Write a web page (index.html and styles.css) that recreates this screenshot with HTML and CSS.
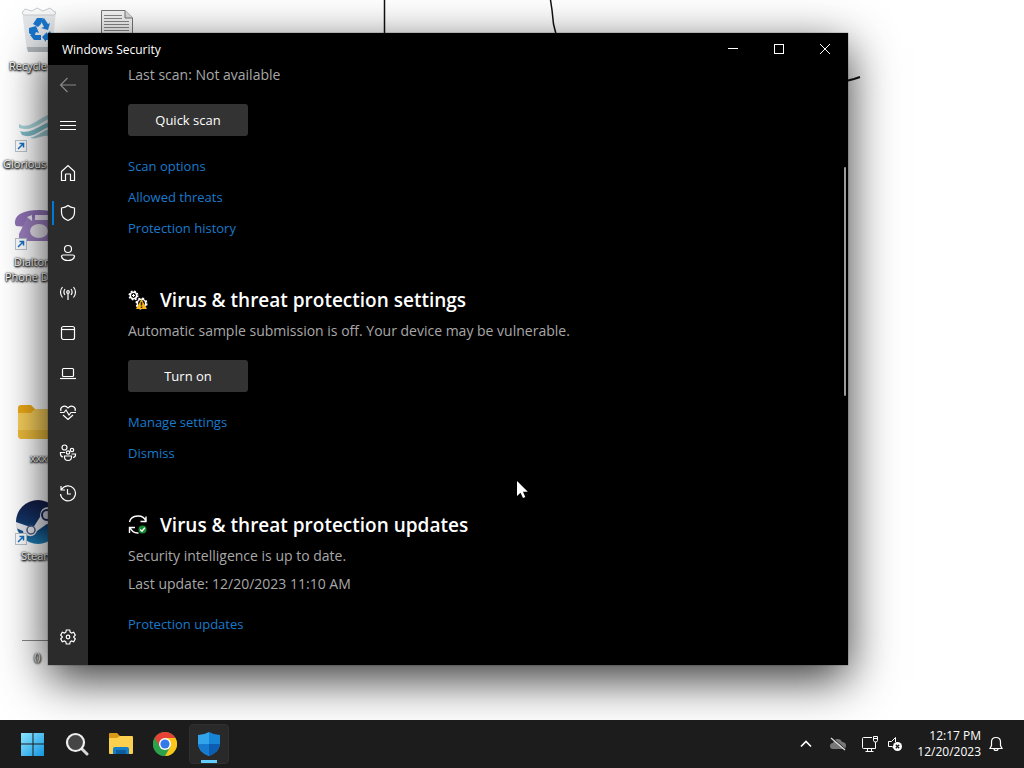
FILE: index.html
```html
<!DOCTYPE html>
<html lang="en">
<head>
<meta charset="utf-8">
<title>Windows Security</title>
<meta name="viewport" content="width=device-width, initial-scale=1">
<link rel="stylesheet" href="styles.css">
</head>
<body>
<div class="desktop">
  <svg class="wallpaper" width="1024" height="100" viewBox="0 0 1024 100" aria-hidden="true" fill="none" stroke="#111">
    <path d="M384.500 0V40" stroke-width="1.500"/>
    <path d="M550.500 0L552 10L553.500 24L556 34" stroke-width="1.500"/>
    <path d="M846 81L852 79.500L854 79L860 77" stroke-width="2"/>
  </svg>

  <div class="shortcut shortcut-recycle">
    <svg width="40" height="48" viewBox="0 0 40 48" aria-hidden="true">
      <path d="M2 5L36 5L32 45H7Z" fill="#e4e7ea"/>
      <path d="M7 41H32L31 46H8Z" fill="#b4b9bd"/>
      <path d="M2 7L5 3L12 5L17 2L23 5L30 2L36 7L34 9H4Z" fill="#f8f8f8" stroke="#c8ccd0"/>
      <g fill="#1877cf">
        <path d="M13 18L17 12L23 12L21 18L18 21Z"/>
        <path d="M24 12L28 18L30 17L28 24L21 22L24 21L21 15Z"/>
        <path d="M9 22L16 20L19 27L16 26L14 31L9 27Z"/>
        <path d="M15 29H21V34H14L10 29Z"/>
        <path d="M22 31L27 26V28L30 25L32 29L28 34H26V36Z"/>
      </g>
    </svg>
    <span>Recycle Bin</span>
  </div>
  <div class="shortcut shortcut-document">
    <svg width="34" height="40" viewBox="0 0 34 40" aria-hidden="true">
      <path d="M1.500 1.500H25L32.500 9V40H1.500Z" fill="#f6f6f6" stroke="#777"/>
      <path d="M25 1.500V9H32.500" fill="#ddd" stroke="#777"/>
      <path d="M4 6.500H22M4 9.500H22M4 12.500H29M4 15.500H29M4 18.500H29M4 21.500H29" stroke="#888"/>
    </svg>
  </div>
  <div class="shortcut shortcut-glorious">
    <svg width="48" height="46" viewBox="0 0 48 46" aria-hidden="true">
      <path d="M4 15C13 21 21 11 35 5V9C25 14 18 23 4 19Z" fill="#a9d5db"/>
      <path d="M5 22C16 26 25 15 40 11V16C27 18 19 31 7 26Z" fill="#7fbcc8"/>
      <path d="M15 29C23 27 29 20 42 18V29L32 27C27 26 22 31 15 29Z" fill="#9ccbd3"/>
      <rect x=".5" y="31.500" width="11" height="11" fill="#fff" stroke="#b9c4cc"/><path d="M3 40L8.500 34.500M4.500 34.500H8.500V38.500" fill="none" stroke="#1671c4" stroke-width="1.500"/>
    </svg>
    <span>Glorious Core</span>
  </div>
  <div class="shortcut shortcut-phone">
    <svg width="48" height="44" viewBox="0 0 48 44" aria-hidden="true">
      <path d="M0 17C-1 8 8 3 24 3S48 8 48 17V18H36V12H12V20L1 19Z" fill="#8f72b5"/>
      <path d="M12 11H37L44 25V34H4V27Z" fill="#9b7fbe"/>
      <path d="M12 10L17 8V14Z M20 8H35V13H20Z" fill="#eee7f5"/>
      <ellipse cx="24" cy="24" rx="9" ry="7" fill="#e8e3ed"/>
      <rect x=".5" y="31.500" width="11" height="11" fill="#fff" stroke="#b9c4cc"/><path d="M3 40L8.500 34.500M4.500 34.500H8.500V38.500" fill="none" stroke="#1671c4" stroke-width="1.500"/>
    </svg>
    <span>Dialtone<br>Phone Deck</span>
  </div>
  <div class="shortcut shortcut-folder">
    <svg width="44" height="36" viewBox="0 0 44 36" aria-hidden="true">
      <path d="M0 3Q0 0 3 0H13L17 4H44V12H0Z" fill="#eeaa18"/>
      <path d="M0 8H13L17 4H44V33H3Q0 33 0 30Z" fill="#f8cf5b"/>
      <path d="M0 25H44V34H3Q0 34 0 30Z" fill="#eebc3d"/>
    </svg>
    <span>xxx</span>
  </div>
  <div class="shortcut shortcut-steam">
    <svg width="48" height="48" viewBox="0 0 48 48" aria-hidden="true">
      <defs><linearGradient id="steam" x2="0" y2="1"><stop stop-color="#151b45"/><stop offset=".5" stop-color="#12376c"/><stop offset="1" stop-color="#1d82bb"/></linearGradient></defs>
      <circle cx="23" cy="23" r="22" fill="url(#steam)"/>
      <path d="M1 23L18 29L25 18Q25 8 34 8T43 18T32 25L22 32Q20 38 14 37T8 32L1 29Z" fill="#e6e7ee"/>
      <circle cx="32" cy="16" r="5" fill="#cdd1db" stroke="#1b2855" stroke-width="2"/>
      <circle cx="16" cy="31" r="4" fill="#e6e7ee" stroke="#4d5a80" stroke-width="1.500"/>
      <rect x=".5" y="34.500" width="11" height="11" fill="#fff" stroke="#b9c4cc"/><path d="M3 43L8.500 37.500M4.500 37.500H8.500V41.500" fill="none" stroke="#1671c4" stroke-width="1.500"/>
    </svg>
    <span>Steam</span>
  </div>
  <div class="shortcut shortcut-file"><span>()</span></div>

  <main class="window">
    <header class="titlebar">
      <h1>Windows Security</h1>
      <div class="caption-buttons">
        <button type="button" aria-label="Minimize"><svg width="12" height="12" viewBox="0 0 12 12"><path d="M1 5.500H11"/></svg></button>
        <button type="button" aria-label="Maximize"><svg width="12" height="12" viewBox="0 0 12 12"><rect x="1.500" y="1.500" width="9" height="9"/></svg></button>
        <button type="button" aria-label="Close"><svg width="12" height="12" viewBox="0 0 12 12"><path d="M1 1L11 11M11 1L1 11"/></svg></button>
      </div>
    </header>
    <div class="window-body">
      <nav class="sidebar" aria-label="Sections">
        <button type="button" class="back" aria-label="Back"><svg width="18" height="18" viewBox="0 0 18 18"><path d="M17 9H1.500M8.500 2L1.500 9L8.500 16"/></svg></button>
        <button type="button" class="menu" aria-label="Menu"><svg width="18" height="18" viewBox="0 0 18 18"><path d="M1 5.500H17M1 9.500H17M1 13.500H17"/></svg></button>
        <button type="button" aria-label="Home"><svg width="18" height="18" viewBox="0 0 18 18"><path d="M2.500 7.500L9 1.500L15.500 7.500V16.500H11.500V10.500Q11.500 10 11 10H7Q6.500 10 6.500 10.500V16.500H2.500Z"/></svg></button>
        <button type="button" class="selected" aria-label="Virus &amp; threat protection"><svg width="18" height="18" viewBox="0 0 18 18"><path d="M9 1.500Q11.500 3.700 15.500 4V8.500Q15.500 14 9 16.500Q2.500 14 2.500 8.500V4Q6.500 3.700 9 1.500Z"/></svg></button>
        <button type="button" aria-label="Account protection"><svg width="18" height="18" viewBox="0 0 18 18"><circle cx="9" cy="5" r="3.500"/><path d="M4 11H14Q15.500 11 15.500 12.500Q14.500 16.500 9 16.500T2.500 12.500Q2.500 11 4 11Z"/></svg></button>
        <button type="button" aria-label="Firewall &amp; network protection"><svg width="18" height="18" viewBox="0 0 18 18"><circle cx="9" cy="8" r="1.300"/><path d="M9 9.500V16M6 5Q3.800 8 6 11M12 5Q14.200 8 12 11M3.500 3Q-.5 8 3.500 13.500M14.500 3Q18.500 8 14.500 13.500"/></svg></button>
        <button type="button" aria-label="App &amp; browser control"><svg width="18" height="18" viewBox="0 0 18 18"><rect x="2.500" y="2.500" width="13" height="13" rx="2"/><path d="M2.500 5.500H15.500"/></svg></button>
        <button type="button" aria-label="Device security"><svg width="18" height="18" viewBox="0 0 18 18"><rect x="3.500" y="4.500" width="11" height="8" rx="1"/><path d="M1 14.500H17"/></svg></button>
        <button type="button" aria-label="Device performance &amp; health"><svg width="18" height="18" viewBox="0 0 18 18"><path d="M2 7Q1 4.500 3 3Q6.500 .8 9 4Q11.500 .8 15 3Q17 4.500 16 7M1 8.500H5L7 6L10 11L12 8.500H17M4 11L9 15.500L14 11"/></svg></button>
        <button type="button" aria-label="Family options"><svg width="18" height="18" viewBox="0 0 18 18"><circle cx="5.500" cy="3.500" r="2.500"/><circle cx="13" cy="6" r="1.700"/><circle cx="9" cy="8.500" r="1.700"/><path d="M5.500 12H12.500V13Q12.500 16.500 9 16.500T5.500 13ZM6 8.500H1.500V10Q1.500 12.500 4 13M12.500 10H16.500V11Q16.500 13 14 13.500"/></svg></button>
        <button type="button" aria-label="Protection history"><svg width="18" height="18" viewBox="0 0 18 18"><path d="M2 2V6H6M2.500 5.500A7.500 7.500 0 1 1 1.500 10M8.500 5V10H12"/></svg></button>
        <button type="button" class="settings" aria-label="Settings"><svg width="18" height="18" viewBox="0 0 18 18"><path d="M7.300 2H10.700L11.200 4.200L12.500 5L14.700 4.300L16.300 7.200L14.700 8.700V9.300L16.300 10.800L14.700 13.700L12.500 13L11.200 13.800L10.700 16H7.300L6.800 13.800L5.500 13L3.300 13.700L1.700 10.800L3.300 9.300V8.700L1.700 7.200L3.300 4.300L5.500 5L6.800 4.200Z"/><circle cx="9" cy="9" r="1.800"/></svg></button>
      </nav>
      <div class="content">
        <section>
          <p>Last scan: Not available</p>
          <button type="button" class="action">Quick scan</button>
          <ul class="links">
            <li><a href="#scan-options">Scan options</a></li>
            <li><a href="#allowed">Allowed threats</a></li>
            <li><a href="#history">Protection history</a></li>
          </ul>
        </section>
        <section>
          <h2>
            <svg width="20" height="20" viewBox="0 0 20 20" aria-hidden="true">
              <g fill="none" stroke="#fff"><circle cx="5.500" cy="5.500" r="3.200" stroke-width="1.500"/><circle cx="5.500" cy="5.500" r="4.300" stroke-width="1.500" stroke-dasharray="1.700 1.700"/><path d="M5.500 4V7M4 5.500H7"/><circle cx="13.500" cy="13.500" r="4.200" stroke-width="1.500"/><circle cx="13.500" cy="13.500" r="5.300" stroke-width="1.500" stroke-dasharray="2.100 2.060"/></g>
              <path d="M13.500 9L19 19H8Z" fill="#f8b51b"/><path d="M13.500 12V15.500M13.500 16.500V18" stroke="#332500" stroke-width="1.500"/>
            </svg>
            Virus &amp; threat protection settings
          </h2>
          <p>Automatic sample submission is off. Your device may be vulnerable.</p>
          <button type="button" class="action">Turn on</button>
          <ul class="links">
            <li><a href="#manage">Manage settings</a></li>
            <li><a href="#dismiss">Dismiss</a></li>
          </ul>
        </section>
        <section>
          <h2>
            <svg width="20" height="20" viewBox="0 0 20 20" aria-hidden="true">
              <path d="M1.500 7A8.500 7.500 0 0 1 18 6.500M18 1.500V6.500H12.500M10.500 18Q4.500 18.500 2 12.500M1.500 18V12.500H7" fill="none" stroke="#fff" stroke-width="1.400"/>
              <circle cx="14.500" cy="14.500" r="4" fill="#138a2e"/><path d="M12.200 14.500L14 16.300L16.800 12.800" fill="none" stroke="#fff" stroke-width="1.400"/>
            </svg>
            Virus &amp; threat protection updates
          </h2>
          <p>Security intelligence is up to date.</p>
          <p>Last update: 12/20/2023 11:10 AM</p>
          <ul class="links">
            <li><a href="#updates">Protection updates</a></li>
          </ul>
        </section>
        <div class="scroll-thumb"></div>
      </div>
    </div>
  </main>
  <svg class="cursor" width="13" height="19" viewBox="0 0 13 19" aria-hidden="true"><path d="M1 1V16L4.500 12.700L7 18L9.300 17L7 11.800H11.800Z" fill="#fff"/></svg>
</div>

<footer class="taskbar">
  <div class="apps">
    <button type="button" aria-label="Start"><svg width="24" height="24" viewBox="0 0 24 24"><defs><linearGradient id="win" x2="1" y2="1"><stop stop-color="#8be5ff"/><stop offset="1" stop-color="#1496e0"/></linearGradient></defs><path d="M0 1H11.500V11.500H0ZM12.500 1H23V11.500H12.500ZM0 12.500H11.500V24H0ZM12.500 12.500H23V24H12.500Z" fill="url(#win)"/></svg></button>
    <button type="button" aria-label="Search"><svg width="24" height="24" viewBox="0 0 24 24"><path d="M17 17L22 22" stroke="#d8d8d8" stroke-width="3" stroke-linecap="round"/><circle cx="10.500" cy="10.500" r="8.500" fill="#454545" stroke="#eee" stroke-width="2.200"/></svg></button>
    <button type="button" aria-label="File Explorer"><svg width="26" height="24" viewBox="0 0 26 24"><path d="M1 2Q1 1 2 1H9L12 4H24V10H1Z" fill="#d99a16"/><path d="M1 6H9L12 4H24Q25 4 25 5V21Q25 22 24 22H2Q1 22 1 21Z" fill="#fbd04f"/><path d="M5 22V17Q5 15 7 15H19Q21 15 21 17V22Z" fill="#167dc9"/><path d="M8 18H18V22H8Z" fill="#0c5c9e"/></svg></button>
    <button type="button" aria-label="Chrome"><svg width="24" height="24" viewBox="0 0 24 24"><circle cx="12" cy="12" r="12" fill="#2ca24c"/><path d="M12 12L1.600 6A12 12 0 0 1 22.400 6Z" fill="#e64235"/><path d="M12 6H22.400A12 12 0 0 1 12 24L17.200 15Z" fill="#fbc51b"/><path d="M1.600 6L6.800 15L12 12L12 6Z" fill="#e64235"/><path d="M1.600 6L6.800 15L9 17L12 24A12 12 0 0 1 1.600 6Z" fill="#2ca24c"/><circle cx="12" cy="12" r="6" fill="#fff"/><circle cx="12" cy="12" r="4.600" fill="#3479e8"/></svg></button>
    <button type="button" class="active" aria-label="Windows Security"><svg width="24" height="26" viewBox="0 0 24 26"><path d="M12 1Q17 4 23 4V12Q23 21 12 25Z" fill="#1685d8"/><path d="M12 1Q7 4 1 4V12Q1 21 12 25Z" fill="#31a4ec"/><path d="M1 13H12V25Q2 21 1 13Z" fill="#167bd0"/><path d="M12 13H23Q22 21 12 25Z" fill="#0c5cb2"/></svg></button>
  </div>
  <div class="tray">
    <button type="button" aria-label="Show hidden icons"><svg width="16" height="16" viewBox="0 0 16 16"><path d="M3 10.500L8 5.500L13 10.500" stroke-width="1.700"/></svg></button>
    <button type="button" aria-label="OneDrive"><svg width="18" height="16" viewBox="0 0 18 16"><path d="M4 13Q1 13 1 10T4 7Q5 3 8.500 3T13 6Q17 6 17 9.500T14 13Z" fill="#777" stroke="none"/><path d="M3 1.500L17 13.500" stroke="#1c1c1c"/><path d="M2 2L16 14" stroke="#ddd" stroke-width="1.300"/></svg></button>
    <button type="button" class="network" aria-label="Network"><svg width="18" height="18" viewBox="0 0 18 18"><path d="M11 2.500H2.500Q1.500 2.500 1.500 3.500V12.500Q1.500 13.500 2.500 13.500H14.500V7M6.500 13.500V16.500M10.500 13.500V16.500M4.500 16.500H12.500M12.500 1.500H16.500V5.500Q16.500 7 14.500 7T12.500 5.500ZM12.500 3.500H16.500"/></svg></button>
    <button type="button" class="sound" aria-label="Volume muted"><svg width="16" height="16" viewBox="0 0 16 16"><path d="M8 13L5 10.500H1.500V5.500H4.500L8.500 1.500V6"/><circle cx="10.500" cy="10.500" r="4.500" fill="#fff" stroke="none"/><path d="M8.800 8.800L12.200 12.200M12.200 8.800L8.800 12.200" stroke="#1c1c1c" stroke-width="1.300"/></svg></button>
    <button type="button" class="clock"><span>12:17 PM</span><span>12/20/2023</span></button>
    <button type="button" class="bell" aria-label="Notifications"><svg width="16" height="16" viewBox="0 0 16 16"><path d="M2 12.500L3.500 9.500V6Q3.500 1.500 8 1.500T12.500 6V9.500L14 12.500ZM6 12.500Q6 14.500 8 14.500T10 12.500" stroke-width="1.200"/></svg></button>
  </div>
</footer>
</body>
</html>
```

FILE: styles.css
```css
* {
  box-sizing: border-box;
}

body {
  margin: 0;
  min-height: 100vh;
  display: flex;
  flex-direction: column;
  background: #fff;
  color: #fff;
  font-family: "Open Sans", "Noto Sans", sans-serif;
  font-size: 14px;
}

button {
  border: 0;
  padding: 0;
  background: none;
  color: inherit;
  font: inherit;
}

svg {
  display: block;
  flex: none;
}

/* Desktop */
.desktop {
  position: relative;
  flex: 1;
  overflow: hidden;
}

.wallpaper {
  position: absolute;
  top: 0;
  left: 0;
}

.shortcut {
  position: absolute;
  display: flex;
  flex-direction: column;
  align-items: flex-start;
  white-space: nowrap;
  font-size: 11px;
  line-height: 15px;
  text-shadow: 0 0 2px #000, 1px 1px 2px #000, 0 1px 2px #000;
}

.shortcut-recycle { left: 9px; top: 6px; gap: 4px; }
.shortcut-recycle svg { margin-left: 11px; }
.shortcut-document { left: 100px; top: 9px; }
.shortcut-glorious { left: 3px; top: 109px; gap: 1px; }
.shortcut-glorious svg { margin-left: 12px; }
.shortcut-phone { left: 5px; top: 207px; gap: 3px; text-align: center; }
.shortcut-phone svg { margin-left: 10px; }
.shortcut-folder { left: 18px; top: 405px; gap: 9px; }
.shortcut-folder span { margin-left: 12px; }
.shortcut-steam { left: 15px; top: 499px; gap: 1px; }
.shortcut-steam span { margin-left: 6px; }

.shortcut-file {
  left: 22px;
  top: 640px;
  width: 40px;
  padding: 8px 12px;
  border-top: 1px solid #888;
}

/* Security window */
.window {
  position: absolute;
  inset: 33px 176px 55px 48px;
  display: flex;
  flex-direction: column;
  background: #000;
  box-shadow: 0 14px 44px rgba(0, 0, 0, 0.8), 0 0 1px #444;
}

.titlebar {
  display: flex;
  flex: none;
  height: 32px;
  align-items: center;
  justify-content: space-between;
  padding-left: 14px;
}

.titlebar h1 {
  margin: 0;
  font-size: 12px;
  font-weight: 400;
}

.caption-buttons {
  display: flex;
  align-self: stretch;
}

.caption-buttons button {
  width: 46px;
  display: grid;
  place-items: center;
}

.caption-buttons svg,
.sidebar svg,
.tray svg {
  fill: none;
  stroke: #fff;
}

.window-body {
  display: flex;
  flex: 1;
  min-height: 0;
}

.sidebar {
  display: flex;
  flex: none;
  flex-direction: column;
  width: 40px;
  padding-bottom: 8px;
  background: #2b2b2b;
}

.sidebar button {
  display: grid;
  place-items: center;
  height: 40px;
}

.sidebar svg {
  stroke-width: 1.2;
}

.sidebar .back svg {
  stroke: #888;
}

.sidebar .menu {
  margin-bottom: 8px;
}

.sidebar .selected {
  background: linear-gradient(#0078d4, #0078d4) 4px center / 2px 24px no-repeat;
}

.sidebar .settings {
  margin-top: auto;
}

.content {
  position: relative;
  display: flex;
  flex: 1;
  flex-direction: column;
  gap: 42px;
  padding: 0 40px;
  overflow: hidden;
}

.content h2 {
  display: flex;
  align-items: center;
  gap: 12px;
  margin: 0 0 7px;
  font-size: 19px;
  font-weight: 600;
  line-height: 28px;
}

.content p {
  margin: 0;
  color: #a8a8a8;
  line-height: 20px;
}

.content p + p {
  margin-top: 8px;
}

.action {
  display: block;
  width: 120px;
  height: 32px;
  margin-top: 19px;
  border-radius: 3px;
  background: #333;
  font-size: 13px;
}

.links {
  margin: 15px 0 0;
  padding: 0;
  list-style: none;
  font-size: 13px;
  line-height: 31px;
}

.links a {
  color: #1a7acb;
  text-decoration: none;
}

.scroll-thumb {
  position: absolute;
  top: 102px;
  right: 2px;
  width: 2px;
  height: 229px;
  border-radius: 1px;
  background: #9a9a9a;
}

.cursor {
  position: absolute;
  left: 516px;
  top: 480px;
}

/* Taskbar */
.taskbar {
  display: flex;
  flex: none;
  height: 48px;
  align-items: center;
  justify-content: space-between;
  padding: 0 20px 0 13px;
  background: #1c1c1c;
}

.apps {
  display: flex;
  gap: 4px;
}

.apps button {
  width: 40px;
  height: 40px;
  display: grid;
  place-items: center;
}

.apps .active {
  border: 1px solid #303030;
  border-radius: 4px;
  background: linear-gradient(#60cdff, #60cdff) center bottom / 16px 3px no-repeat, #292929;
}

.tray {
  display: flex;
  align-items: center;
}

.tray button {
  width: 32px;
  display: grid;
  place-items: center;
}

.tray .sound {
  width: 18px;
}

.tray .clock {
  width: auto;
  padding: 0 7px 0 13px;
  justify-items: end;
  font-size: 12px;
  line-height: 16px;
}

.tray .bell {
  width: 16px;
}
```
